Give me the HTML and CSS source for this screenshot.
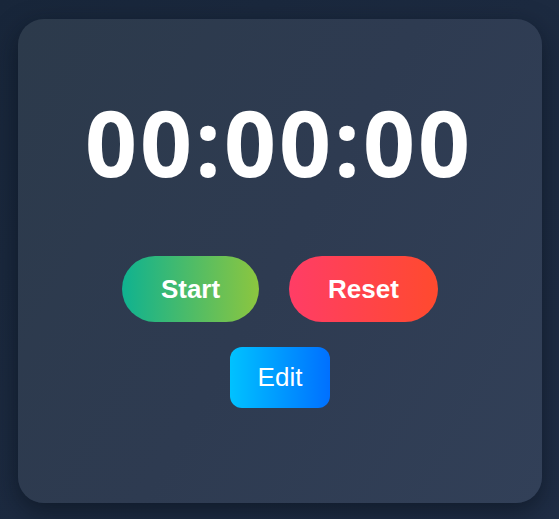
FILE: index.html
```html
<!DOCTYPE html>
<html lang="en">
<head>
<meta charset="utf-8">
<title>Timer</title>
<link rel="stylesheet" href="styles.css">
</head>
<body>
<main class="card">
  <div class="time">00:00:00</div>
  <div class="row">
    <button class="btn pill start">Start</button>
    <button class="btn pill reset">Reset</button>
  </div>
  <div class="row edit-row">
    <button class="btn edit">Edit</button>
  </div>
</main>
</body>
</html>
```
FILE: styles.css
```css
html, body {
  margin: 0;
  padding: 0;
}
body {
  min-height: 100vh;
  box-sizing: border-box;
  padding: 19px 0 0 18px;
  display: flex;
  align-items: flex-start;
  justify-content: flex-start;
  background: linear-gradient(135deg, #18263a 0%, #1c2a40 50%, #1f2d45 100%);
  font-family: "Liberation Sans", Arial, sans-serif;
}
.card {
  width: 524px;
  height: 484px;
  box-sizing: border-box;
  border-radius: 26px;
  background: linear-gradient(120deg, #2c3a4b 0%, #2e3b51 50%, #324058 100%);
  box-shadow: 0 8px 24px rgba(8, 14, 24, 0.55);
  display: flex;
  flex-direction: column;
  align-items: center;
  padding-top: 61px;
}
.time {
  font-family: "Open Sans", sans-serif;
  font-weight: 700;
  font-size: 91px;
  color: #ffffff;
  line-height: 124px;
  letter-spacing: 3px;
  margin-right: 2px;
}
.row {
  display: flex;
  gap: 30px;
  justify-content: center;
  margin-top: 52px;
}
.edit-row {
  margin-top: 25px;
}
.btn {
  border: none;
  padding: 0;
  color: #fff;
  font-family: "Liberation Sans", Arial, sans-serif;
  cursor: pointer;
}
.pill {
  border-radius: 999px;
  font-weight: 700;
  font-size: 26px;
  height: 66px;
}
.start {
  width: 137px;
  background: linear-gradient(90deg, #0fb290 0%, #8cc63f 100%);
}
.reset {
  width: 149px;
  background: linear-gradient(90deg, #ff3d66 0%, #ff4a2e 100%);
}
.edit {
  width: 100px;
  height: 61px;
  border-radius: 12px;
  font-size: 26px;
  font-weight: 400;
  background: linear-gradient(90deg, #00c2ff 0%, #0070ff 100%);
}
```
